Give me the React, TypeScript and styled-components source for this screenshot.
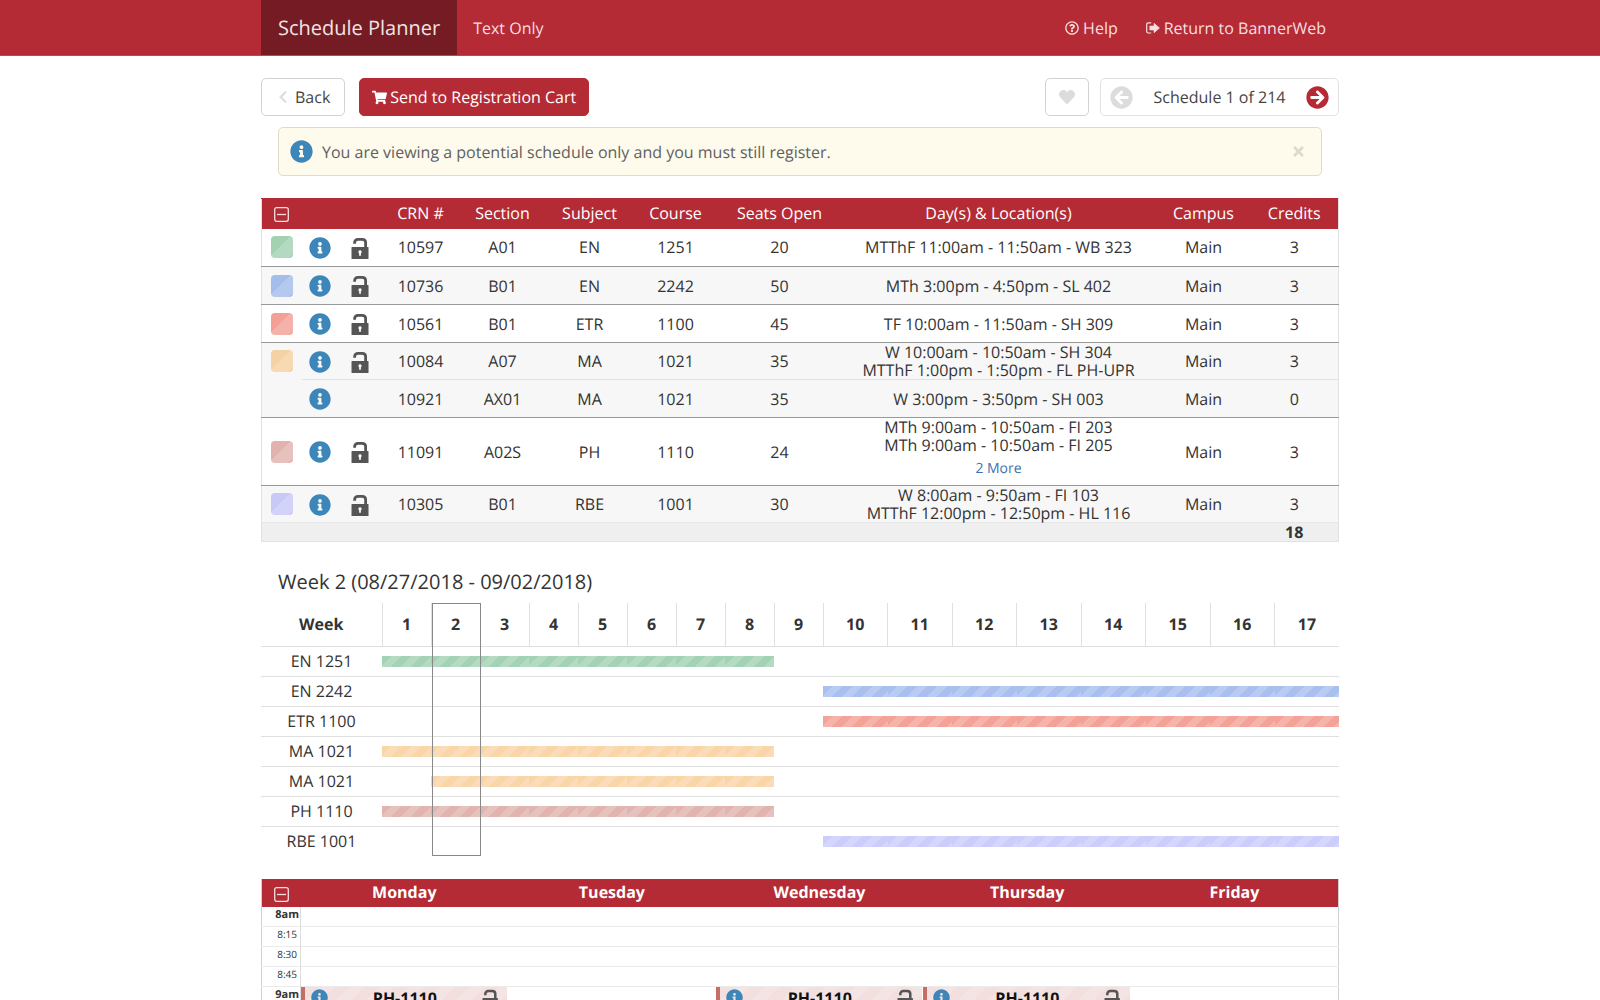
import React from "react";
import styled, { createGlobalStyle, css } from "styled-components";
import {
  FaArrowCircleLeft,
  FaArrowCircleRight,
  FaChevronLeft,
  FaHeart,
  FaInfoCircle,
  FaRegQuestionCircle,
  FaShoppingCart,
  FaTimes,
} from "react-icons/fa";

const RED = "#b52b35";
const BLUE = "#3c86b9";

const GlobalStyle = createGlobalStyle`
  *, *::before, *::after { box-sizing: border-box; }
  body {
    margin: 0;
    background: #fff;
    color: #333;
    font-family: "Open Sans", "Noto Sans", sans-serif;
    font-size: 16px;
    line-height: 22px;
    text-rendering: geometricPrecision;
  }
  button { font: inherit; cursor: pointer; text-rendering: inherit; }
  table { border-collapse: collapse; table-layout: fixed; width: 100%; }
  th, td { padding: 0; text-align: center; }
`;

const stripes = css`
  background-image: linear-gradient(
    135deg,
    rgba(255, 255, 255, 0) 25%,
    rgba(255, 255, 255, 0.18) 25%,
    rgba(255, 255, 255, 0.18) 50%,
    rgba(255, 255, 255, 0) 50%,
    rgba(255, 255, 255, 0) 75%,
    rgba(255, 255, 255, 0.18) 75%
  );
`;

const Page = styled.div`
  height: 100vh;
  overflow: hidden;
`;

const Container = styled.div`
  width: 100%;
  max-width: 1078px;
  margin: 0 auto;
`;

const TopBar = styled.header`
  background: ${RED};
  border-bottom: 1px solid #bf4750;
`;

const Nav = styled(Container).attrs({ as: "nav" })`
  display: flex;
  height: 55px;
  padding-right: 13px;
`;

const Brand = styled.a`
  display: flex;
  align-items: center;
  padding: 0 17px;
  background: #741b23;
  color: #f0e4e5;
  font-size: 20px;
  text-decoration: none;
`;

const NavLink = styled.a<{ $push?: boolean }>`
  display: flex;
  align-items: center;
  gap: 4px;
  padding: 0 ${(p) => (p.$push ? 28 : 0)}px 0 ${(p) => (p.$push ? 16 : 0)}px;
  margin-left: ${(p) => (p.$push ? "auto" : "0")};
  color: #f5dfe1;
  text-decoration: none;
  svg { font-size: 14px; }
  ${Brand} + & { padding: 0 16px; }
`;

const Toolbar = styled.div`
  display: flex;
  padding: 22px 0 11px;
`;

const Button = styled.button<{ $primary?: boolean }>`
  display: flex;
  align-items: center;
  justify-content: center;
  gap: 3px;
  height: 38px;
  padding: 0 12px;
  border: 1px solid ${(p) => (p.$primary ? RED : "#d2d2d2")};
  border-radius: 5px;
  background: ${(p) => (p.$primary ? RED : "#fff")};
  color: ${(p) => (p.$primary ? "#fff" : "#444")};
  svg { font-size: 15px; }
`;

const BackButton = styled(Button)`
  gap: 5px;
  padding: 0 14px;
  margin-right: 14px;
  svg { color: #ddd; font-size: 14px; }
`;

const HeartButton = styled(Button)`
  width: 44px;
  padding: 0;
  margin: 0 11px 0 auto;
  color: #dcdcdc;
  svg { font-size: 16px; }
`;

const Pager = styled.div`
  display: flex;
  align-items: center;
  justify-content: space-between;
  width: 239px;
  height: 38px;
  padding: 0 9px;
  border: 1px solid #e2e2e2;
  border-radius: 5px;
  color: #444;
`;

const IconButton = styled.button<{ $color: string; $size: number }>`
  display: inline-flex;
  padding: 0;
  border: 0;
  background: none;
  color: ${(p) => p.$color};
  font-size: ${(p) => p.$size}px;
  vertical-align: middle;
`;

const Alert = styled.div`
  display: flex;
  align-items: center;
  gap: 9px;
  height: 49px;
  margin: 0 17px 22px;
  padding: 0 15px 0 11px;
  border: 1px solid #dfdbc9;
  border-radius: 5px;
  background: #fefbed;
  color: #606060;
  button:last-child { margin-left: auto; }
`;

const CourseTable = styled.table`
  border: 1px solid #e2e2e2;
  border-top-color: ${RED};
`;

const HeadCell = styled.th`
  height: 30px;
  padding-bottom: 2px;
  background: ${RED};
  color: #fff;
  font-weight: 400;
`;

const CourseRow = styled.tr<{ $shaded?: boolean; $compact?: boolean; $last?: boolean }>`
  height: ${(p) => (p.$compact ? 37 : 38)}px;
  background: ${(p) => (p.$shaded ? "#f7f7f7" : "#fff")};
  td { border-bottom: 1px solid ${(p) => (p.$last ? "#e6e6e6" : "#999")}; }
`;

const Cell = styled.td<{ $light?: boolean; $none?: boolean }>`
  && {
    ${(p) => p.$light && "border-bottom-color: #e2e2e2;"}
    ${(p) => p.$none && "border-bottom: 0;"}
  }
`;

const Meetings = styled.div`
  line-height: 18px;
`;

const MoreLink = styled.a`
  display: block;
  padding: 5px 0 7px;
  color: #3b73af;
  font-size: 14px;
  line-height: 19px;
  text-decoration: none;
`;

const Swatch = styled.div<{ $color: string }>`
  width: 22px;
  height: 22px;
  margin: 0 auto;
  border-radius: 4px;
  background-color: ${(p) => p.$color};
  background-size: 40px 40px;
  ${stripes}
`;

const TotalRow = styled.tr`
  height: 19px;
  background: #efefef;
  font-weight: 700;
  line-height: 18px;
`;

const WeekTitle = styled.h2`
  margin: 0;
  padding: 26px 17px 8px;
  font-size: 20px;
  font-weight: 400;
  line-height: 27px;
`;

const WeekTable = styled.table`
  margin-bottom: 23px;
  tbody th { font-weight: 400; }
  tbody tr { height: 30px; border-top: 1px solid #e0e0e0; }
`;

const WeekHead = styled.th<{ $outlineRows?: number }>`
  position: relative;
  height: 43px;
  border-left: 1px solid #e0e0e0;
  &:first-child { border-left: 0; }
  ${(p) =>
    p.$outlineRows &&
    `&::after {
      content: "";
      position: absolute;
      z-index: 1;
      inset: 0 -1px auto 0;
      height: calc(100% + ${p.$outlineRows * 30}px);
      border: 1px solid #888;
    }`}
`;

const Bar = styled.div<{ $color: string }>`
  height: 11px;
  background-color: ${(p) => p.$color};
  background-size: 20px 20px;
  ${stripes}
`;

const Calendar = styled.table`
  border: 1px solid #d0d0d0;
  border-top: 0;
  thead tr { background: ${RED}; color: #fff; }
  thead th { height: 28px; padding-bottom: 3px; }
  thead th:first-child { padding-bottom: 0; }
  tbody tr { height: 20px; border-bottom: 1px solid #ebebeb; }
  tbody tr:first-child { height: 19px; }
`;

const TimeCell = styled.th<{ $hour?: boolean }>`
  && {
    padding-right: ${(p) => (p.$hour ? "1px" : "3px")};
    border-right: 1px solid #ddd;
    font-size: ${(p) => (p.$hour ? 11 : 10)}px;
    font-weight: ${(p) => (p.$hour ? 700 : 400)};
    line-height: 15px;
    text-align: right;
    vertical-align: top;
  }
`;

const Slot = styled.td`
  position: relative;
`;

const Event = styled.div`
  position: absolute;
  inset: 0 1px auto 0;
  display: flex;
  justify-content: space-between;
  height: 120px;
  padding: 2px 9px 0 6px;
  border-left: 4px solid #c56e66;
  background-color: #f2dfde;
  background-size: 30px 30px;
  ${stripes}
  color: #111;
  font-weight: 700;
  line-height: 18px;
`;

function Unlock({ size = 22 }: { size?: number }) {
  return (
    <svg width={size * 0.82} height={size} viewBox="0 0 18 22" aria-hidden="true">
      <path
        d="M3.600 6.800V5.800C3.600 3.400 5 2.300 7 2.300h4.200C13.400 2.300 14.600 3.400 14.600 5.400v5.100"
        fill="none"
        stroke="#555"
        strokeWidth="2.800"
      />
      <path
        fillRule="evenodd"
        fill="#555"
        d="M1 10h16q.5 0 .5.5v11q0 .5-.5.5H1q-.5 0-.5-.5v-11q0-.5.5-.5ZM9 13.200a1.700 1.700 0 0 0-.9 3.100V18.800h1.800V16.300A1.700 1.700 0 0 0 9 13.200Z"
      />
    </svg>
  );
}

function Collapse() {
  return (
    <svg width="15" height="15" viewBox="0 0 15 15" fill="none" stroke="#f6dfe1" aria-hidden="true">
      <rect x=".7" y=".7" width="13.600" height="13.600" rx="2" strokeWidth="1.300" />
      <path d="M3 7.500h9" strokeWidth="1.300" />
    </svg>
  );
}

function SignOut() {
  return (
    <svg width="14" height="14" viewBox="0 0 14 14" aria-hidden="true">
      <path d="M5.200 1.800H2.400Q.7 1.800.7 3.500v6.800q0 1.700 1.700 1.700h2.800" fill="none" stroke="currentColor" strokeWidth="1.200" />
      <path d="M8 2.200 13.500 7 8 11.800V9H3.800V5H8Z" fill="currentColor" stroke="currentColor" strokeWidth=".6" strokeLinejoin="round" />
    </svg>
  );
}

type Course = {
  crn: string;
  section: string;
  subject: string;
  course: string;
  seats: number;
  meetings: string[];
  more?: string;
  credits: number;
  color?: string;
  shaded?: boolean;
  grouped?: boolean;
};

const courses: Course[] = [
  { crn: "10597", section: "A01", subject: "EN", course: "1251", seats: 20, meetings: ["MTThF 11:00am - 11:50am - WB 323"], credits: 3, color: "#a3d2b3" },
  { crn: "10736", section: "B01", subject: "EN", course: "2242", seats: 50, meetings: ["MTh 3:00pm - 4:50pm - SL 402"], credits: 3, color: "#a5bdeb", shaded: true },
  { crn: "10561", section: "B01", subject: "ETR", course: "1100", seats: 45, meetings: ["TF 10:00am - 11:50am - SH 309"], credits: 3, color: "#f3a197" },
  { crn: "10084", section: "A07", subject: "MA", course: "1021", seats: 35, meetings: ["W 10:00am - 10:50am - SH 304", "MTThF 1:00pm - 1:50pm - FL PH-UPR"], credits: 3, color: "#f5d1a3", shaded: true, grouped: true },
  { crn: "10921", section: "AX01", subject: "MA", course: "1021", seats: 35, meetings: ["W 3:00pm - 3:50pm - SH 003"], credits: 0, shaded: true },
  { crn: "11091", section: "A02S", subject: "PH", course: "1110", seats: 24, meetings: ["MTh 9:00am - 10:50am - FI 203", "MTh 9:00am - 10:50am - FI 205"], more: "2 More", credits: 3, color: "#e1b3af" },
  { crn: "10305", section: "B01", subject: "RBE", course: "1001", seats: 30, meetings: ["W 8:00am - 9:50am - FI 103", "MTThF 12:00pm - 12:50pm - HL 116"], credits: 3, color: "#c9c9f8", shaded: true },
];

const columnWidths = [40, 37, 44, 76, 88, 86, 86, 122, undefined, 94, 88];
const columnNames = ["CRN #", "Section", "Subject", "Course", "Seats Open", "Day(s) & Location(s)", "Campus", "Credits"];

const weekRows = [
  { name: "EN 1251", from: 1, to: 8, color: "#a4d2b4" },
  { name: "EN 2242", from: 10, to: 17, color: "#a9c0ef" },
  { name: "ETR 1100", from: 10, to: 17, color: "#f3a298" },
  { name: "MA 1021", from: 1, to: 8, color: "#f9d5a8" },
  { name: "MA 1021", from: 2, to: 8, color: "#f9d5a8" },
  { name: "PH 1110", from: 1, to: 8, color: "#e1b4b0" },
  { name: "RBE 1001", from: 10, to: 17, color: "#cccdfb" },
];

const weeks = Array.from({ length: 17 }, (_, i) => i + 1);
const selectedWeek = 2;
const days = ["Monday", "Tuesday", "Wednesday", "Thursday", "Friday"];
const times = ["8am", "8:15", "8:30", "8:45", "9am"];
const eventDays = ["Monday", "Wednesday", "Thursday"];

export default function App() {
  return (
    <Page>
      <GlobalStyle />
      <TopBar>
        <Nav>
          <Brand href="#">Schedule Planner</Brand>
          <NavLink href="#text">Text Only</NavLink>
          <NavLink href="#help" $push>
            <FaRegQuestionCircle /> Help
          </NavLink>
          <NavLink href="#return">
            <SignOut /> Return to BannerWeb
          </NavLink>
        </Nav>
      </TopBar>

      <Container as="main">
        <Toolbar>
          <BackButton type="button">
            <FaChevronLeft /> Back
          </BackButton>
          <Button type="button" $primary>
            <FaShoppingCart /> Send to Registration Cart
          </Button>
          <HeartButton type="button" aria-label="Favorite">
            <FaHeart />
          </HeartButton>
          <Pager>
            <IconButton type="button" $color="#dcdcdc" $size={23} aria-label="Previous schedule">
              <FaArrowCircleLeft />
            </IconButton>
            <span>Schedule 1 of 214</span>
            <IconButton type="button" $color={RED} $size={23} aria-label="Next schedule">
              <FaArrowCircleRight />
            </IconButton>
          </Pager>
        </Toolbar>

        <Alert role="status">
          <FaInfoCircle size={23} color={BLUE} />
          <span>You are viewing a potential schedule only and you must still register.</span>
          <IconButton type="button" $color="#dcdacb" $size={15} aria-label="Dismiss">
            <FaTimes />
          </IconButton>
        </Alert>

        <CourseTable>
          <colgroup>
            {columnWidths.map((w, i) => (
              <col key={i} width={w} />
            ))}
          </colgroup>
          <thead>
            <tr>
              <HeadCell>
                <IconButton type="button" $color="#fff" $size={15} aria-label="Collapse courses">
                  <Collapse />
                </IconButton>
              </HeadCell>
              <HeadCell />
              <HeadCell />
              {columnNames.map((name) => (
                <HeadCell key={name}>{name}</HeadCell>
              ))}
            </tr>
          </thead>
          <tbody>
            {courses.map((c, i) => (
              <CourseRow
                key={c.crn}
                $shaded={c.shaded}
                $compact={c.meetings.length > 1}
                $last={i === courses.length - 1}
              >
                <Cell $none={c.grouped}>{c.color && <Swatch $color={c.color} />}</Cell>
                <Cell $light={c.grouped}>
                  <IconButton type="button" $color={BLUE} $size={22} aria-label={`Details for ${c.crn}`}>
                    <FaInfoCircle />
                  </IconButton>
                </Cell>
                <Cell $light={c.grouped}>
                  {c.color && (
                    <IconButton type="button" $color="#555" $size={22} aria-label={`Lock ${c.crn}`}>
                      <Unlock />
                    </IconButton>
                  )}
                </Cell>
                <Cell $light={c.grouped}>{c.crn}</Cell>
                <Cell $light={c.grouped}>{c.section}</Cell>
                <Cell $light={c.grouped}>{c.subject}</Cell>
                <Cell $light={c.grouped}>{c.course}</Cell>
                <Cell $light={c.grouped}>{c.seats}</Cell>
                <Cell $light={c.grouped}>
                  <Meetings>
                    {c.meetings.map((m) => (
                      <div key={m}>{m}</div>
                    ))}
                    {c.more && <MoreLink href="#more">{c.more}</MoreLink>}
                  </Meetings>
                </Cell>
                <Cell $light={c.grouped}>Main</Cell>
                <Cell $light={c.grouped}>{c.credits}</Cell>
              </CourseRow>
            ))}
          </tbody>
          <tfoot>
            <TotalRow>
              <td colSpan={10} />
              <td>18</td>
            </TotalRow>
          </tfoot>
        </CourseTable>

        <WeekTitle>Week 2 (08/27/2018 - 09/02/2018)</WeekTitle>
        <WeekTable>
          <colgroup>
            <col width={121} />
            {weeks.map((w) => (
              <col key={w} width={w < 10 ? 49 : undefined} />
            ))}
          </colgroup>
          <thead>
            <tr>
              <WeekHead>Week</WeekHead>
              {weeks.map((w) => (
                <WeekHead key={w} $outlineRows={w === selectedWeek ? weekRows.length : undefined}>
                  {w}
                </WeekHead>
              ))}
            </tr>
          </thead>
          <tbody>
            {weekRows.map((row, i) => (
              <tr key={i}>
                <th scope="row">{row.name}</th>
                {weeks.map((w) => (
                  <td key={w}>{w >= row.from && w <= row.to && <Bar $color={row.color} />}</td>
                ))}
              </tr>
            ))}
          </tbody>
        </WeekTable>

        <Calendar>
          <colgroup>
            <col width={39} />
            {days.map((d) => (
              <col key={d} />
            ))}
          </colgroup>
          <thead>
            <tr>
              <th>
                <IconButton type="button" $color="#fff" $size={15} aria-label="Collapse calendar">
                  <Collapse />
                </IconButton>
              </th>
              {days.map((d) => (
                <th key={d}>{d}</th>
              ))}
            </tr>
          </thead>
          <tbody>
            {times.map((t) => (
              <tr key={t}>
                <TimeCell scope="row" $hour={t.endsWith("am")}>
                  {t}
                </TimeCell>
                {days.map((d) => (
                  <Slot key={d}>
                    {t === "9am" && eventDays.includes(d) && (
                      <Event>
                        <FaInfoCircle size={17} color={BLUE} />
                        PH-1110
                        <Unlock size={20} />
                      </Event>
                    )}
                  </Slot>
                ))}
              </tr>
            ))}
          </tbody>
        </Calendar>
      </Container>
    </Page>
  );
}
